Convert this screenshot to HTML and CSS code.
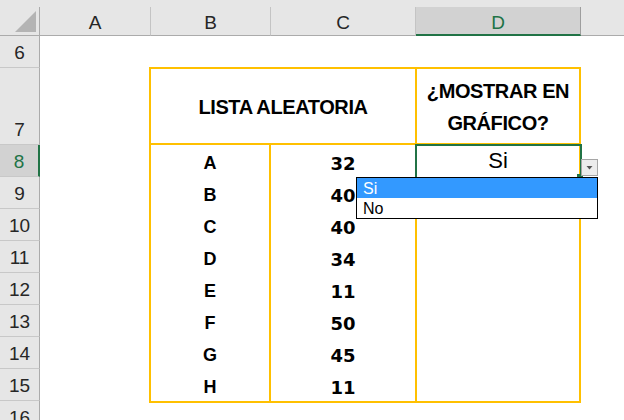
FILE: index.html
```html
<!DOCTYPE html>
<html lang="es">
<head>
    <meta charset="UTF-8">
    <title>Lista aleatoria</title>
    <link rel="stylesheet" href="styles.css">
</head>
<body>
    <div class="excel">
        <div class="topbar"></div>

        <div class="sheet">
            <div class="corner">
                <svg width="39" height="28" viewBox="0 0 39 28"><polygon points="36,4 36,25 15,25" fill="#b4b4b4"/></svg>
            </div>
            <div class="col-head">A</div>
            <div class="col-head">B</div>
            <div class="col-head">C</div>
            <div class="col-head active">D</div>
            <div class="col-head last"></div>

            <div class="row-head">6</div>
            <div class="row-head">7</div>
            <div class="row-head active">8</div>
            <div class="row-head">9</div>
            <div class="row-head">10</div>
            <div class="row-head">11</div>
            <div class="row-head">12</div>
            <div class="row-head">13</div>
            <div class="row-head">14</div>
            <div class="row-head">15</div>
            <div class="row-head">16</div>

            <div class="lista">
                <div class="titulo doble">LISTA ALEATORIA</div>
                <div class="titulo">¿MOSTRAR EN<br>GRÁFICO?</div>
                <div class="columna letras">
                    <div class="celda">A</div>
                    <div class="celda">B</div>
                    <div class="celda">C</div>
                    <div class="celda">D</div>
                    <div class="celda">E</div>
                    <div class="celda">F</div>
                    <div class="celda">G</div>
                    <div class="celda">H</div>
                </div>
                <div class="columna numeros">
                    <div class="celda">32</div>
                    <div class="celda">40</div>
                    <div class="celda">40</div>
                    <div class="celda">34</div>
                    <div class="celda">11</div>
                    <div class="celda">50</div>
                    <div class="celda">45</div>
                    <div class="celda">11</div>
                </div>
                <div class="columna mostrar">
                    <div class="celda">Si</div>
                </div>
            </div>
        </div>

        <!-- celda activa y desplegable de validacion -->
        <div class="seleccion"></div>
        <div class="asa"></div>
        <div class="boton-lista">
            <svg width="15" height="15" viewBox="0 0 15 15"><polygon points="4.5,6 10.5,6 7.5,9.5" fill="#555"/></svg>
        </div>
        <ul class="opciones">
            <li class="marcada">Si</li>
            <li>No</li>
        </ul>
    </div>
</body>
</html>
```

FILE: styles.css
```css
body {
    margin: 0;
    width: 624px;
    height: 420px;
    overflow: hidden;
    background: #fff;
    font-family: "Liberation Sans", Arial, sans-serif;
}
.excel {
    position: relative;
    width: 624px;
    height: 420px;
}
.topbar {
    height: 7px;
    background: #e6e6e6;
}
.sheet {
    display: grid;
    grid-template-columns: 40px 111px 120px 145px 165px 1fr;
    grid-template-rows: 29px 32px 77px repeat(9, 32px);
    background: #fff;
}
.corner, .col-head, .row-head {
    box-sizing: border-box;
    background: #e6e6e6;
    color: #262626;
    font-size: 19px;
}
.corner {
    border-right: 1px solid #ababab;
    border-bottom: 1px solid #ababab;
}
.corner svg {
    display: block;
}
.col-head {
    border-right: 1px solid #c4c4c4;
    border-bottom: 1px solid #ababab;
    text-align: center;
    padding-top: 4px;
    line-height: 24px;
}
.col-head.active {
    background: #d2d2d2;
    color: #217346;
    border-right-color: #9e9e9e;
    border-bottom: 2px solid #217346;
}
.col-head.last {
    border-right: none;
}
.row-head {
    grid-column: 1;
    border-right: 1px solid #ababab;
    border-bottom: 1px solid #c8c8c8;
    display: flex;
    align-items: flex-end;
    justify-content: center;
    padding-bottom: 3px;
}
.row-head.active {
    background: #d2d2d2;
    color: #217346;
    border-right: 2px solid #217346;
}

.lista {
    grid-column: 3 / 6;
    grid-row: 3 / 12;
    margin: -1px 0 -2px -2px;
    display: grid;
    grid-template-columns: 118px 144px 1fr;
    grid-template-rows: 74px 1fr;
    gap: 2px;
    padding: 2px;
    background: #ffc000;
}
.lista > div {
    background: #fff;
}
.titulo {
    display: flex;
    align-items: center;
    justify-content: center;
    text-align: center;
    font-family: "Liberation Sans Narrow", "Liberation Sans", "Arial Narrow", sans-serif;
    font-weight: bold;
    font-size: 20px;
    letter-spacing: -0.4px;
    line-height: 32px;
    padding-top: 1px;
}
.titulo.doble {
    grid-column: span 2;
}
.celda {
    height: 32px;
    box-sizing: border-box;
    display: flex;
    align-items: flex-end;
    justify-content: center;
    padding-bottom: 3px;
}
.letras .celda {
    font-weight: bold;
    font-size: 18px;
}
.numeros .celda {
    font-family: "DejaVu Sans", Verdana, sans-serif;
    font-weight: bold;
    font-size: 18px;
}
.mostrar .celda {
    font-size: 22px;
    padding-bottom: 3px;
}

.seleccion {
    position: absolute;
    left: 415px;
    top: 144px;
    width: 167px;
    height: 35px;
    box-sizing: border-box;
    border: 2px solid #217346;
}
.asa {
    position: absolute;
    left: 577px;
    top: 174px;
    width: 6px;
    height: 6px;
    background: #217346;
}
.boton-lista {
    position: absolute;
    left: 581px;
    top: 159px;
    width: 17px;
    height: 17px;
    box-sizing: border-box;
    border: 1px solid #a6a6a6;
    background: #ececec;
}
.boton-lista svg {
    display: block;
}
.opciones {
    position: absolute;
    left: 356px;
    top: 177px;
    width: 242px;
    margin: 0;
    padding: 0;
    list-style: none;
    box-sizing: border-box;
    border: 1px solid #000;
    background: #fff;
    font-size: 16px;
}
.opciones li {
    height: 20px;
    box-sizing: border-box;
    padding: 2px 0 0 6px;
    line-height: 18px;
    color: #000;
}
.opciones li.marcada {
    background: #3399ff;
    color: #fff;
}
```
